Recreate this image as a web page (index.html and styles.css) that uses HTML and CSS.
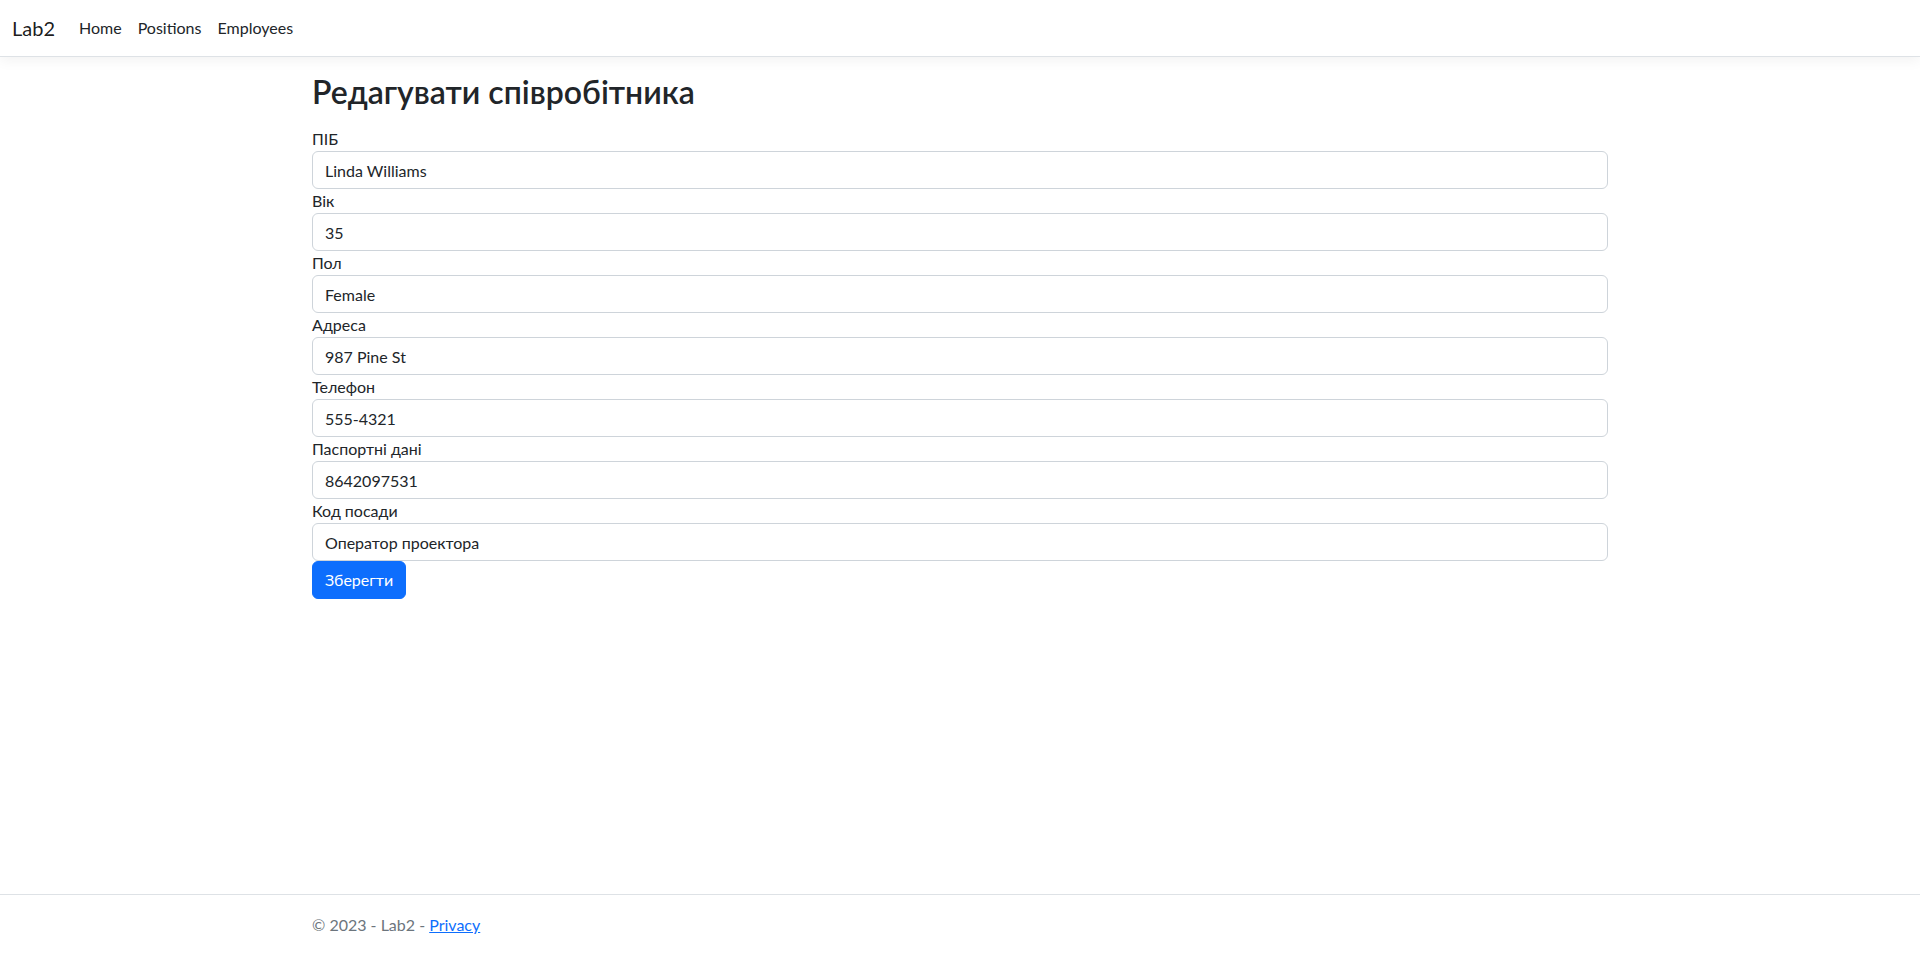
FILE: index.html
```html
<!DOCTYPE html>
<html lang="uk">
<head>
<meta charset="utf-8">
<title>Edit - Lab2</title>
<link rel="stylesheet" href="styles.css">
</head>
<body>
<header>
  <nav class="navbar">
    <div class="navbar-inner">
      <a class="brand" href="#">Lab2</a>
      <ul class="nav">
        <li><a class="nav-link" href="#">Home</a></li>
        <li><a class="nav-link" href="#">Positions</a></li>
        <li><a class="nav-link" href="#">Employees</a></li>
      </ul>
    </div>
  </nav>
</header>
<div class="container main">
  <h2 class="title">Редагувати співробітника</h2>
  <form class="form">
    <div class="group">
      <label class="label">ПІБ</label>
      <input class="control" type="text" value="Linda Williams">
    </div>
    <div class="group">
      <label class="label">Вік</label>
      <input class="control" type="text" value="35">
    </div>
    <div class="group">
      <label class="label">Пол</label>
      <input class="control" type="text" value="Female">
    </div>
    <div class="group">
      <label class="label">Адреса</label>
      <input class="control" type="text" value="987 Pine St">
    </div>
    <div class="group">
      <label class="label">Телефон</label>
      <input class="control" type="text" value="555-4321">
    </div>
    <div class="group">
      <label class="label">Паспортні дані</label>
      <input class="control" type="text" value="8642097531">
    </div>
    <div class="group">
      <label class="label">Код посади</label>
      <input class="control" type="text" value="Оператор проектора">
    </div>
    <div class="actions">
      <button class="btn" type="button">Зберегти</button>
    </div>
  </form>
</div>
<footer class="footer">
  <div class="container footer-inner">© 2023 - Lab2 - <a href="#" class="footer-link">Privacy</a></div>
</footer>
</body>
</html>
```
FILE: styles.css
```css
*{box-sizing:border-box}
html,body{height:100%}
body{
  margin:0;
  font-family:Lato,"Noto Sans",sans-serif;
  font-size:16px;
  line-height:1.5;
  color:#212529;
  background:#fff;
  display:flex;
  flex-direction:column;
  min-height:955px;
}
.navbar{
  background:#fff;
  border-bottom:1px solid #dee2e6;
  box-shadow:0 4px 12px rgba(0,0,0,.05);
  padding:8px 0;
  margin-bottom:16px;
}
.navbar-inner{
  display:flex;
  align-items:center;
  padding:0 12px;
}
.brand{
  font-size:20px;
  line-height:30px;
  padding:5px 0;
  margin-right:16px;
  color:rgba(0,0,0,.9);
  text-decoration:none;
}
.nav{
  display:flex;
  list-style:none;
  margin:0;
  padding:0;
}
.nav-link{
  display:block;
  padding:8px;
  color:#212529;
  text-decoration:none;
}
.container{
  width:100%;
  max-width:1320px;
  margin:0 auto;
  padding:0 12px;
}
.main{flex:1 0 auto;padding-bottom:16px}
.title{
  margin:0 0 16px;
  font-size:32px;
  font-weight:600;
  line-height:1.2;
}
.form{margin:0}
.label{display:inline-block}
.control{
  display:block;
  width:100%;
  height:38px;
  padding:6px 12px;
  font-family:inherit;
  font-size:16px;
  line-height:1.5;
  color:#212529;
  background:#fff;
  border:1px solid #ced4da;
  border-radius:6px;
}
.btn{
  display:inline-block;
  padding:6px 12px;
  font-family:inherit;
  font-size:16px;
  line-height:1.5;
  color:#fff;
  background:#0d6efd;
  border:1px solid #0d6efd;
  border-radius:6px;
  cursor:pointer;
}
.footer{
  border-top:1px solid #dee2e6;
  flex-shrink:0;
}
.footer-inner{
  line-height:60px;
  white-space:nowrap;
  color:#6c757d;
}
.footer-link{color:#0d6efd}
```
